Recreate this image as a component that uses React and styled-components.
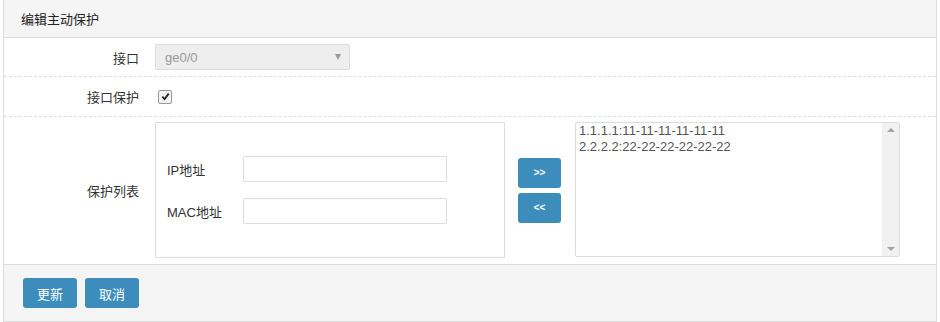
import React from "react"
import styled, { createGlobalStyle } from "styled-components"

const GlobalStyle = createGlobalStyle`
  html, body {
    margin: 0;
    padding: 0;
    background: #fff;
  }
  body {
    font-family: "Liberation Sans", "Noto Sans CJK SC", sans-serif;
    font-size: 13px;
    color: #333;
  }
`

const Panel = styled.div`
  margin: 0 3px;
  width: 934px;
  border: 1px solid #ddd;
  border-top: none;
  box-sizing: border-box;
`

const Header = styled.div`
  height: 37px;
  background: #f5f5f5;
  border-bottom: 1px solid #ddd;
  display: flex;
  align-items: center;
  padding-left: 17px;
  font-weight: normal;
  color: #222;
`

const Row = styled.div`
  display: grid;
  grid-template-columns: 151px 1fr;
  align-items: center;
  height: ${(p) => p.h}px;
  border-bottom: ${(p) => (p.last ? "none" : "1px dashed #ddd")};
  box-sizing: border-box;
`

const Label = styled.div`
  text-align: right;
  padding-right: 16px;
  color: #333;
`

const SelectBox = styled.div`
  width: 195px;
  height: 26px;
  box-sizing: border-box;
  background: #eee;
  border: 1px solid #ddd;
  border-radius: 2px;
  display: flex;
  align-items: center;
  justify-content: space-between;
  padding: 0 8px 0 9px;
  color: #999;
`

const Arrow = styled.span`
  width: 0;
  height: 0;
  border-left: 3px solid transparent;
  border-right: 3px solid transparent;
  border-top: 6px solid #999;
`

const Check = styled.span`
  display: inline-flex;
  align-items: center;
  justify-content: center;
  width: 12px;
  height: 12px;
  margin-left: 3px;
  border: 1px solid #999;
  border-radius: 2px;
  background: #f2f2f2;
`

const ListArea = styled.div`
  display: flex;
  align-items: center;
  padding: 5px 0 6px;
  height: 100%;
  box-sizing: border-box;
`

const FieldBox = styled.div`
  width: 350px;
  height: 136px;
  box-sizing: border-box;
  border: 1px solid #ddd;
  display: flex;
  flex-direction: column;
  justify-content: center;
  gap: 16px;
  padding-left: 11px;
`

const Field = styled.div`
  display: flex;
  align-items: center;
`

const FieldLabel = styled.span`
  width: 76px;
  color: #333;
`

const TextInput = styled.div`
  width: 204px;
  height: 26px;
  box-sizing: border-box;
  border: 1px solid #ddd;
  border-radius: 2px;
  background: #fff;
`

const MoveButtons = styled.div`
  display: flex;
  flex-direction: column;
  gap: 5px;
  margin: 0 14px 0 13px;
`

const SmallButton = styled.button`
  width: 43px;
  height: 30px;
  border: none;
  border-radius: 3px;
  background: #3c8dbc;
  color: #fff;
  font-family: "Liberation Sans", sans-serif;
  font-size: 10px;
  font-weight: bold;
  padding: 0;
`

const ListBox = styled.div`
  width: 325px;
  height: 135px;
  align-self: flex-start;
  box-sizing: border-box;
  border: 1px solid #ddd;
  border-radius: 2px;
  display: flex;
`

const Items = styled.div`
  flex: 1;
  padding: 0 3px;
  line-height: 16px;
  color: #555;
`

const Track = styled.div`
  width: 17px;
  background: #f1f1f1;
  display: flex;
  flex-direction: column;
  justify-content: space-between;
  align-items: center;
  padding: 5px 0;
`

const Tri = styled.span`
  width: 0;
  height: 0;
  border-left: 4px solid transparent;
  border-right: 4px solid transparent;
  ${(p) => (p.up ? "border-bottom: 4px solid #a3a3a3;" : "border-top: 4px solid #a3a3a3;")}
`

const Footer = styled.div`
  height: 56px;
  background: #f5f5f5;
  border-top: 1px solid #ddd;
  display: flex;
  align-items: center;
  gap: 8px;
  padding-left: 19px;
`

const ActionButton = styled.button`
  width: 54px;
  height: 30px;
  border: none;
  border-radius: 3px;
  background: #3c8dbc;
  color: #fff;
  font-family: "Noto Sans CJK SC", sans-serif;
  font-size: 13px;
  padding: 0;
`

export default function App() {
  return (
    <>
      <GlobalStyle />
      <Panel>
        <Header>编辑主动保护</Header>
        <Row h={39}>
          <Label>接口</Label>
          <div>
            <SelectBox>
              <span>ge0/0</span>
              <Arrow />
            </SelectBox>
          </div>
        </Row>
        <Row h={40}>
          <Label>接口保护</Label>
          <div>
            <Check>
              <svg width="9" height="9" viewBox="0 0 10 10">
                <path d="M1.5 5.2 L4 7.8 L8.6 1.8" fill="none" stroke="#222" strokeWidth="2" />
              </svg>
            </Check>
          </div>
        </Row>
        <Row h={147} last>
          <Label>保护列表</Label>
          <ListArea>
            <FieldBox>
              <Field>
                <FieldLabel>IP地址</FieldLabel>
                <TextInput />
              </Field>
              <Field>
                <FieldLabel>MAC地址</FieldLabel>
                <TextInput />
              </Field>
            </FieldBox>
            <MoveButtons>
              <SmallButton>&gt;&gt;</SmallButton>
              <SmallButton>&lt;&lt;</SmallButton>
            </MoveButtons>
            <ListBox>
              <Items>
                <div>1.1.1.1:11-11-11-11-11-11</div>
                <div>2.2.2.2:22-22-22-22-22-22</div>
              </Items>
              <Track>
                <Tri up />
                <Tri />
              </Track>
            </ListBox>
          </ListArea>
        </Row>
        <Footer>
          <ActionButton>更新</ActionButton>
          <ActionButton>取消</ActionButton>
        </Footer>
      </Panel>
    </>
  )
}
